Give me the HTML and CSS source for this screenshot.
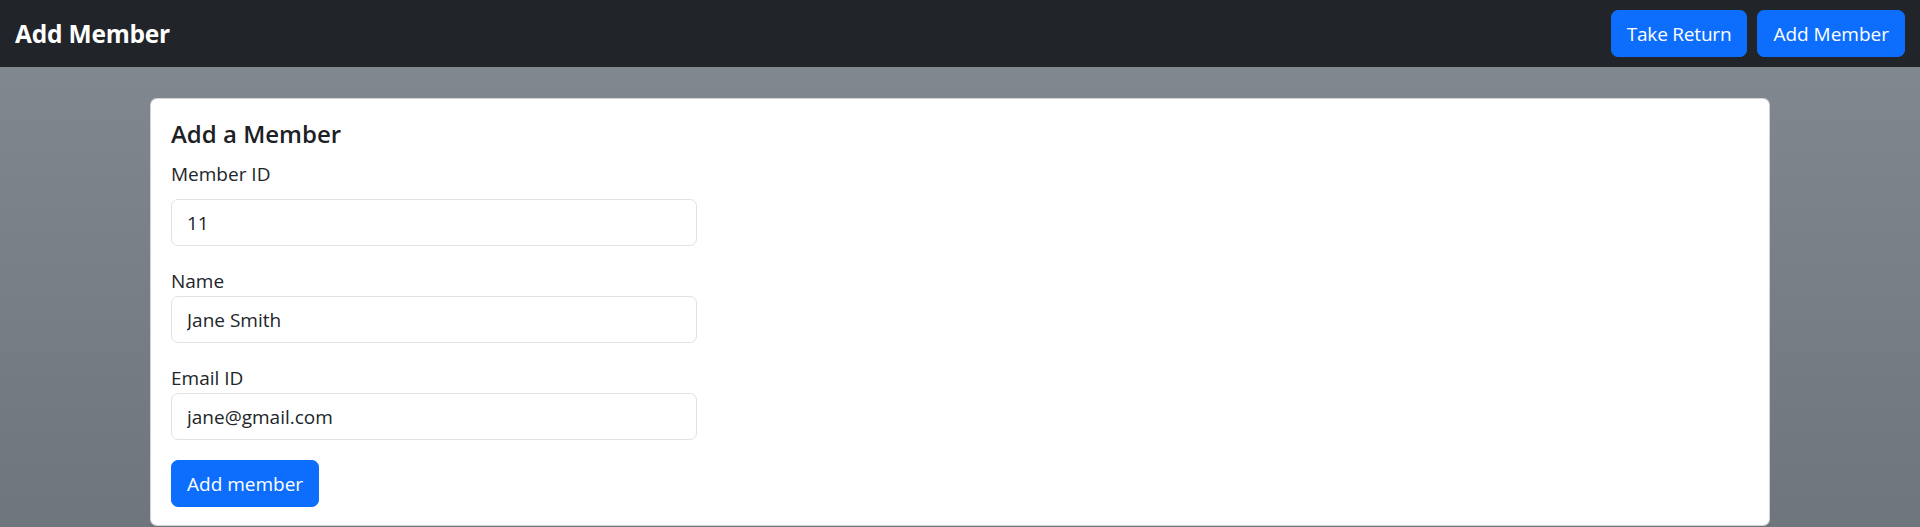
FILE: index.html
```html
<!DOCTYPE html>
<html lang="en">
<head>
<meta charset="utf-8">
<title>Add Member</title>
<link rel="stylesheet" href="styles.css">
</head>
<body>
<nav class="navbar">
  <span class="brand">Add Member</span>
  <div class="nav-actions">
    <button class="btn">Take Return</button>
    <button class="btn">Add Member</button>
  </div>
</nav>
<main class="page">
  <section class="card">
    <h5 class="card-title">Add a Member</h5>
    <form class="form">
      <div class="group">
        <label class="label spaced">Member ID</label>
        <input class="input" type="text" value="11">
      </div>
      <div class="group">
        <label class="label">Name</label>
        <input class="input" type="text" value="Jane Smith">
      </div>
      <div class="group">
        <label class="label">Email ID</label>
        <input class="input" type="text" value="jane@gmail.com">
      </div>
      <button class="btn submit" type="button">Add member</button>
    </form>
  </section>
</main>
</body>
</html>
```
FILE: styles.css
```css
* { box-sizing: border-box; }
html, body { margin: 0; padding: 0; }
body {
  font-family: "Open Sans", "Noto Sans", sans-serif;
  font-size: 19px;
  line-height: 30px;
  color: #212529;
  background: #6e757d;
  height: 527px;
  overflow: hidden;
}
.navbar {
  height: 67px;
  background: #212529;
  display: flex;
  align-items: center;
  justify-content: space-between;
  padding: 0 15px;
}
.brand {
  color: #fff;
  font-weight: 700;
  font-size: 24.5px;
  letter-spacing: -0.2px;
}
.nav-actions { display: flex; gap: 10px; }
.btn {
  font-family: inherit;
  font-size: 19px;
  line-height: 30px;
  color: #fff;
  background: #0d6efd;
  border: 1px solid #0d6efd;
  border-radius: 7px;
  padding: 7.5px 15px;
  height: 47px;
  cursor: pointer;
}
.nav-actions .btn:first-child { letter-spacing: -0.2px; }
.page {
  height: 460px;
  background: linear-gradient(180deg, #80878f 0%, #6e757d 100%);
  padding-top: 31px;
  display: flex;
  justify-content: center;
  align-items: flex-start;
}
.card {
  width: 1620px;
  height: 428px;
  background: #fff;
  border: 1px solid rgba(0,0,0,0.175);
  border-radius: 7px;
  padding: 20px 20px 17px;
}
.card-title {
  margin: 0 0 10px;
  font-size: 24px;
  line-height: 30px;
  font-weight: 600;
  letter-spacing: 0;
  color: #1d2125;
}
.form { display: flex; flex-direction: column; align-items: flex-start; }
.group { width: 33.33%; margin-bottom: 20px; display: flex; flex-direction: column; }
.label { display: block; }
.label.spaced { margin-bottom: 10px; }
.input {
  font-family: inherit;
  font-size: 19px;
  line-height: 30px;
  color: #212529;
  height: 47px;
  width: 100%;
  padding: 7.5px 15px;
  border: 1px solid #dee2e6;
  border-radius: 7px;
  background: #fff;
  outline: none;
}
.submit { width: auto; }
```
